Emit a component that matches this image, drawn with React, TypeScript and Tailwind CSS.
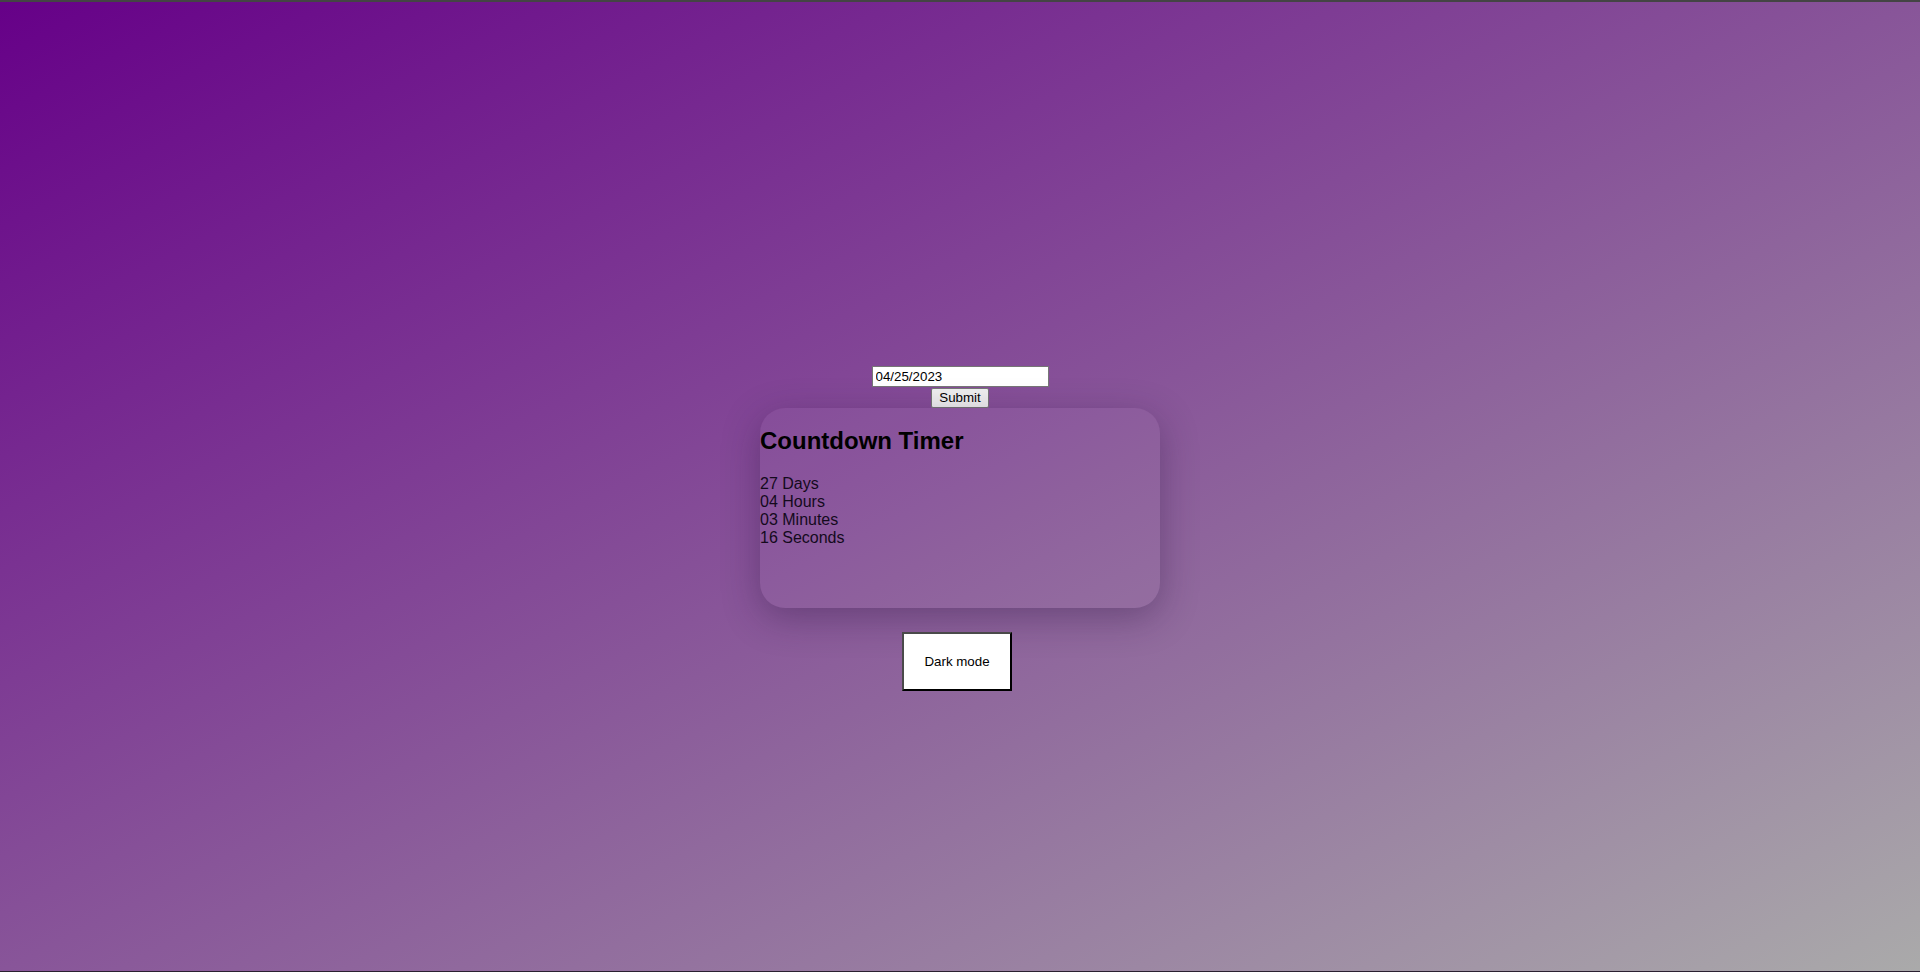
import React from "react";

export default function App() {
  const lines = ["27 Days", "04 Hours", "03 Minutes", "16 Seconds"];
  return (
    <div
      className="relative w-full h-[972px] overflow-hidden bg-[linear-gradient(to_bottom_right,#660088,#aaaaaa)] flex flex-col items-center pt-[366px]"
      style={{ fontFamily: '"Liberation Sans", Arial, sans-serif' }}
    >
      <div className="absolute top-0 left-0 right-0 h-[2px] bg-[#444444]" />
      <div className="absolute bottom-0 left-0 right-0 h-px bg-[#2a2030]" />
      <input
        type="text"
        defaultValue="04/25/2023"
        className="w-[177px] h-[21px] box-border border border-[#767676] bg-white px-[3px] text-[13.33px] text-black outline-none"
        style={{ fontFamily: '"Liberation Sans", Arial, sans-serif' }}
      />
      <button
        className="mt-[1px] w-[58px] h-[20px] box-border border border-[#767676] bg-[#efefef] rounded-[2px] text-[13.33px] text-black leading-none"
        style={{ fontFamily: '"Liberation Sans", Arial, sans-serif' }}
      >
        Submit
      </button>
      <div className="w-[400px] h-[200px] rounded-[25px] bg-white/[0.04] shadow-[0_10px_36px_0_rgba(40,20,60,0.35)] text-black">
        <h2 className="mt-[19px] mb-[20px] text-[24px] font-bold leading-[28px]">
          Countdown Timer
        </h2>
        <div className="text-[16px] leading-[18px] text-[#140a1c]">
          {lines.map((l) => (
            <div key={l}>{l}</div>
          ))}
        </div>
      </div>
      <button
        className="mt-[24px] ml-[-6px] w-[110px] h-[59px] box-border bg-white border-2 border-t-[#4a4a4a] border-l-[#4a4a4a] border-r-black border-b-black text-[13.33px] text-black"
        style={{ fontFamily: '"Liberation Sans", Arial, sans-serif' }}
      >
        Dark mode
      </button>
    </div>
  );
}
